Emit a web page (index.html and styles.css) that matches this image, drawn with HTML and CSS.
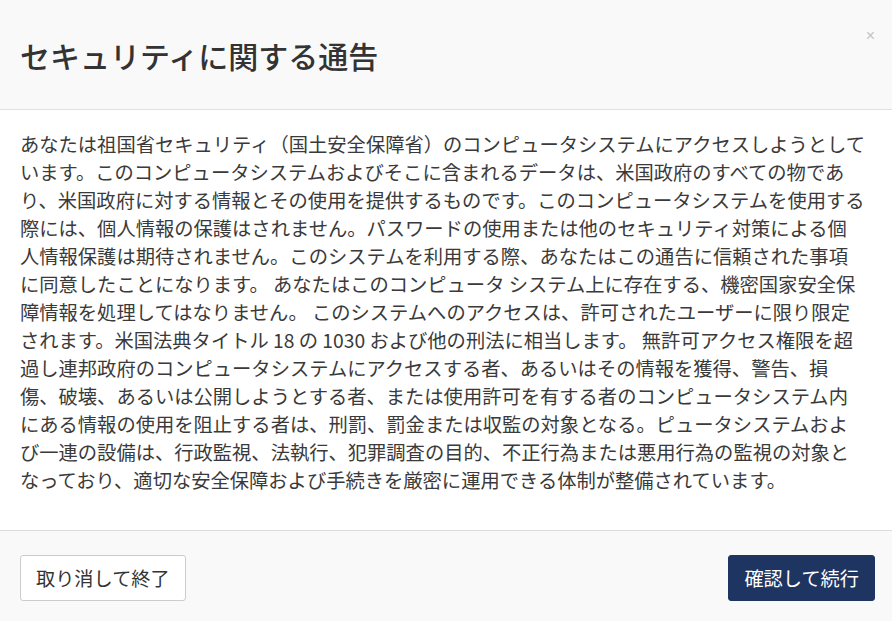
FILE: index.html
```html
<!DOCTYPE html>
<html lang="ja">
<head>
<meta charset="utf-8">
<title>セキュリティに関する通告</title>
<link rel="stylesheet" href="styles.css">
</head>
<body>
<div class="modal">
  <header class="modal-header">
    <h1 class="modal-title">セキュリティに関する通告</h1>
    <button class="close" type="button" aria-label="閉じる">×</button>
  </header>
  <main class="modal-body">
    <p>あなたは祖国省セキュリティ（国土安全保障省）のコンピュータシステムにアクセスしようとして<br>います。このコンピュータシステムおよびそこに含まれるデータは、米国政府のすべての物であ<br>り、米国政府に対する情報とその使用を提供するものです。このコンピュータシステムを使用する<br>際には、個人情報の保護はされません。パスワードの使用または他のセキュリティ対策による個<br>人情報保護は期待されません。このシステムを利用する際、あなたはこの通告に信頼された事項<br>に同意したことになります。 あなたはこのコンピュータ システム上に存在する、機密国家安全保<br>障情報を処理してはなりません。 このシステムへのアクセスは、許可されたユーザーに限り限定<br>されます。米国法典タイトル 18 の 1030 および他の刑法に相当します。 無許可アクセス権限を超<br>過し連邦政府のコンピュータシステムにアクセスする者、あるいはその情報を獲得、警告、損<br>傷、破壊、あるいは公開しようとする者、または使用許可を有する者のコンピュータシステム内<br>にある情報の使用を阻止する者は、刑罰、罰金または収監の対象となる。ピュータシステムおよ<br>び一連の設備は、行政監視、法執行、犯罪調査の目的、不正行為または悪用行為の監視の対象と<br>なっており、適切な安全保障および手続きを厳密に運用できる体制が整備されています。</p>
  </main>
  <footer class="modal-footer">
    <button class="btn btn-default" type="button">取り消して終了</button>
    <button class="btn btn-primary" type="button">確認して続行</button>
  </footer>
</div>
</body>
</html>
```

FILE: styles.css
```css
html, body {
  margin: 0;
  padding: 0;
  background: #ffffff;
}
body {
  font-family: "Noto Sans CJK JP", "Noto Sans", sans-serif;
  color: #333333;
}
.modal {
  width: 892px;
  display: flex;
  flex-direction: column;
}
.modal-header {
  position: relative;
  background: #f9f9f9;
  border-bottom: 1px solid #e0e0e0;
  height: 110px;
  box-sizing: border-box;
  padding: 0 20px;
  display: flex;
  align-items: center;
}
.modal-title {
  margin: 0;
  font-size: 30px;
  font-weight: 500;
  color: #333333;
  line-height: 1.2;
}
.close {
  position: absolute;
  top: 26px;
  right: 17px;
  border: none;
  background: none;
  padding: 0;
  font-family: "Liberation Sans", sans-serif;
  font-size: 16px;
  line-height: 20px;
  color: #c4c4c4;
  cursor: pointer;
}
.modal-body {
  padding: 20px 12px 36px 20px;
}
.modal-body p {
  margin: 0;
  font-size: 19.3px;
  line-height: 28px;
  white-space: nowrap;
  color: #3a3a3a;
}
.modal-footer {
  background: #f9f9f9;
  border-top: 1px solid #dddddd;
  padding: 24px 17px 21px 20px;
  display: flex;
  justify-content: space-between;
  align-items: center;
}
.btn {
  font-family: "Noto Sans CJK JP", "Noto Sans", sans-serif;
  font-size: 19.2px;
  height: 46px;
  padding: 0 15px;
  border-radius: 3px;
  cursor: pointer;
}
.btn-default {
  background: #ffffff;
  color: #333333;
  border: 1px solid #cccccc;
}
.btn-primary {
  background: #1e3561;
  color: #ffffff;
  border: 1px solid #1e3561;
}
```
